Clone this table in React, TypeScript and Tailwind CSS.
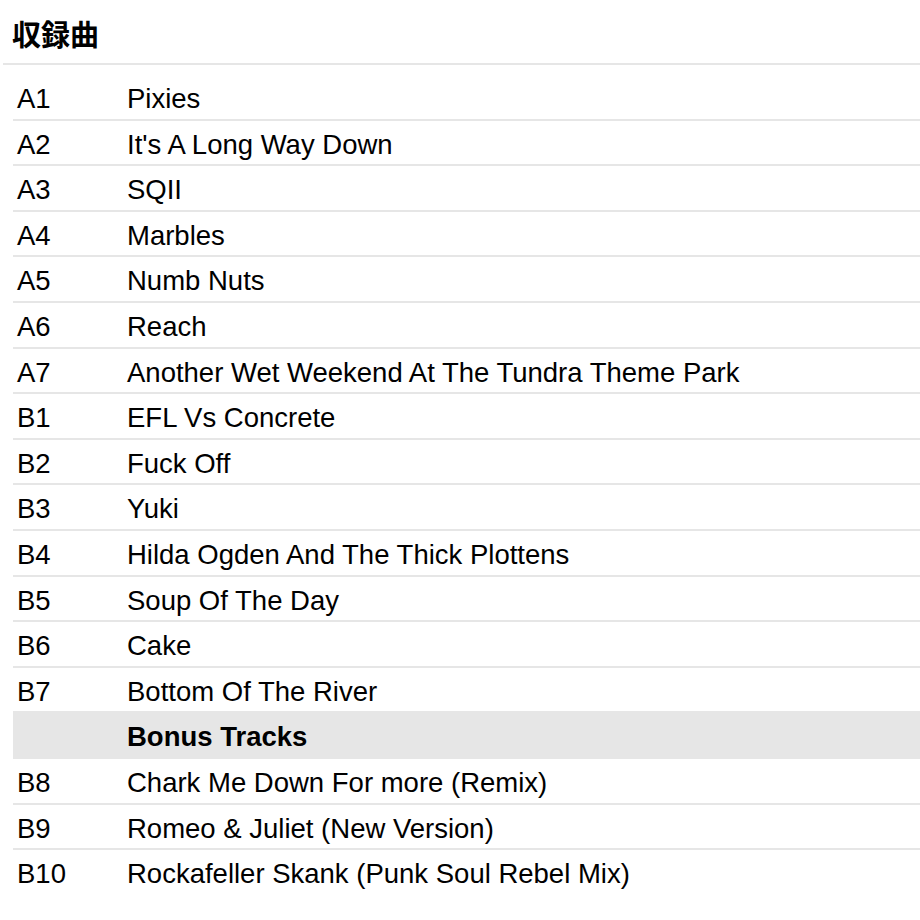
import React from "react";

const tracks: [string, string][] = [
  ["A1", "Pixies"],
  ["A2", "It's A Long Way Down"],
  ["A3", "SQII"],
  ["A4", "Marbles"],
  ["A5", "Numb Nuts"],
  ["A6", "Reach"],
  ["A7", "Another Wet Weekend At The Tundra Theme Park"],
  ["B1", "EFL Vs Concrete"],
  ["B2", "Fuck Off"],
  ["B3", "Yuki"],
  ["B4", "Hilda Ogden And The Thick Plottens"],
  ["B5", "Soup Of The Day"],
  ["B6", "Cake"],
  ["B7", "Bottom Of The River"],
];

const bonus: [string, string][] = [
  ["B8", "Chark Me Down For more (Remix)"],
  ["B9", "Romeo & Juliet (New Version)"],
  ["B10", "Rockafeller Skank (Punk Soul Rebel Mix)"],
];

function Row({ pos, title, last }: { pos: string; title: string; last?: boolean }) {
  return (
    <div
      className={
        "flex h-[45.6px] pt-[9px] leading-[30px] text-[27.5px] whitespace-nowrap " +
        (last ? "" : "border-b-2 border-[#e6e6e6]")
      }
    >
      <div className="w-[110px] shrink-0 pl-[4px]">{pos}</div>
      <div className="pl-[4px]">{title}</div>
    </div>
  );
}

export default function App() {
  return (
    <div className="w-[920px] h-[920px] bg-white text-black font-['Liberation_Sans',Arial,sans-serif] overflow-hidden">
      <h2 className="h-[63px] pl-[12px] pt-[13px] text-[29px] leading-[40px] font-bold font-['Noto_Sans_CJK_JP',sans-serif]">
        収録曲
      </h2>
      <div className="ml-[3px] h-[2px] bg-[#e6e6e6]" />
      <div className="ml-[13px] mt-[10px]">
        {tracks.map(([p, t]) => (
          <Row key={p} pos={p} title={t} />
        ))}
        <div className="flex h-[45.6px] pt-[9px] leading-[30px] text-[27.5px] bg-[#e6e6e6] font-bold">
          <div className="w-[110px] shrink-0 pl-[4px]"></div>
          <div className="pl-[4px]">Bonus Tracks</div>
        </div>
        {bonus.map(([p, t], i) => (
          <Row key={p} pos={p} title={t} last={i === bonus.length - 1} />
        ))}
      </div>
    </div>
  );
}
